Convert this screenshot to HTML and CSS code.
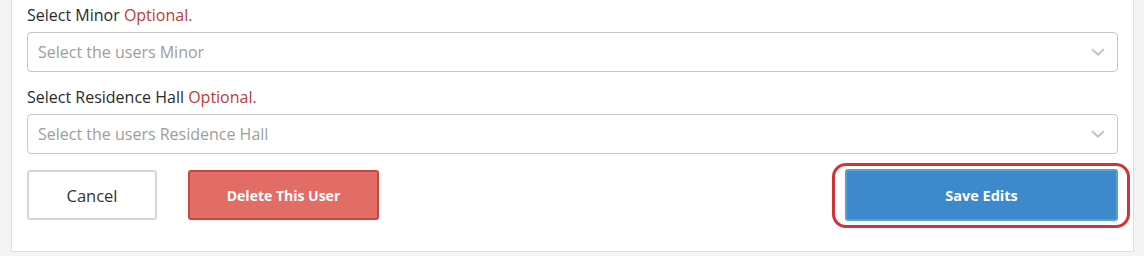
FILE: index.html
```html
<!DOCTYPE html>
<html>
<head>
<meta charset="utf-8">
<link rel="stylesheet" href="styles.css">
</head>
<body>
<div class="page">
  <div class="card">
    <div class="field">
      <label class="label">Select Minor <span class="opt">Optional.</span></label>
      <div class="select">
        <span class="placeholder">Select the users Minor</span>
        <svg class="chev" width="14" height="8" viewBox="0 0 14 8"><path d="M1 1.2 L7 6.6 L13 1.2" fill="none" stroke="#c4c4c4" stroke-width="2"/></svg>
      </div>
    </div>
    <div class="field">
      <label class="label">Select Residence Hall <span class="opt">Optional.</span></label>
      <div class="select">
        <span class="placeholder">Select the users Residence Hall</span>
        <svg class="chev" width="14" height="8" viewBox="0 0 14 8"><path d="M1 1.2 L7 6.6 L13 1.2" fill="none" stroke="#c4c4c4" stroke-width="2"/></svg>
      </div>
    </div>
    <div class="actions">
      <button class="btn cancel">Cancel</button>
      <button class="btn delete">Delete This User</button>
      <button class="btn save">Save Edits</button>
    </div>
  </div>
</div>
</body>
</html>
```
FILE: styles.css
```css
html, body {
  margin: 0;
  padding: 0;
  background: #f4f4f4;
  font-family: "Open Sans", "Noto Sans", sans-serif;
}
.page {
  padding: 0 10px 0 11px;
  height: 256px;
  box-sizing: border-box;
}
.card {
  background: #fff;
  border: 1px solid #e0e0e0;
  border-top: none;
  padding: 6px 15px 30px 15px;
}
.field {
  margin-bottom: 16px;
}
.field:nth-child(2) {
  margin-bottom: 15px;
}
.label {
  display: block;
  font-size: 16px;
  line-height: 18px;
  color: #2b2b2b;
  margin-bottom: 8px;
}
.opt {
  color: #c0393b;
}
.select {
  height: 40px;
  box-sizing: border-box;
  border: 1px solid #c6c8c8;
  border-radius: 4px;
  display: flex;
  align-items: center;
  justify-content: space-between;
  padding: 0 12px 0 10px;
}
.placeholder {
  font-size: 16px;
  color: #9d9d9d;
}
.chev {
  display: block;
}
.actions {
  display: flex;
  align-items: center;
}
.btn {
  font-family: "Open Sans", "Noto Sans", sans-serif;
  height: 50px;
  box-sizing: border-box;
  border-radius: 3px;
  cursor: pointer;
}
.cancel {
  width: 130px;
  background: #fff;
  border: 2px solid #d4d8d8;
  color: #333;
  font-size: 16.5px;
}
.delete {
  width: 191px;
  margin-left: 31px;
  background: #e26c66;
  border: 2px solid #c94740;
  color: #fff;
  font-weight: 700;
  font-size: 14px;
}
.save {
  position: relative;
  margin-left: auto;
  width: 273px;
  height: 52px;
  background: #3d89cc;
  border: 2px solid #5b9fd9;
  color: #fff;
  font-weight: 700;
  font-size: 14.5px;
}
.save::after {
  content: "";
  position: absolute;
  left: -15px;
  right: -14px;
  top: -8px;
  bottom: -9px;
  border: 3px solid #d23435;
  border-radius: 14px;
  pointer-events: none;
}
```
